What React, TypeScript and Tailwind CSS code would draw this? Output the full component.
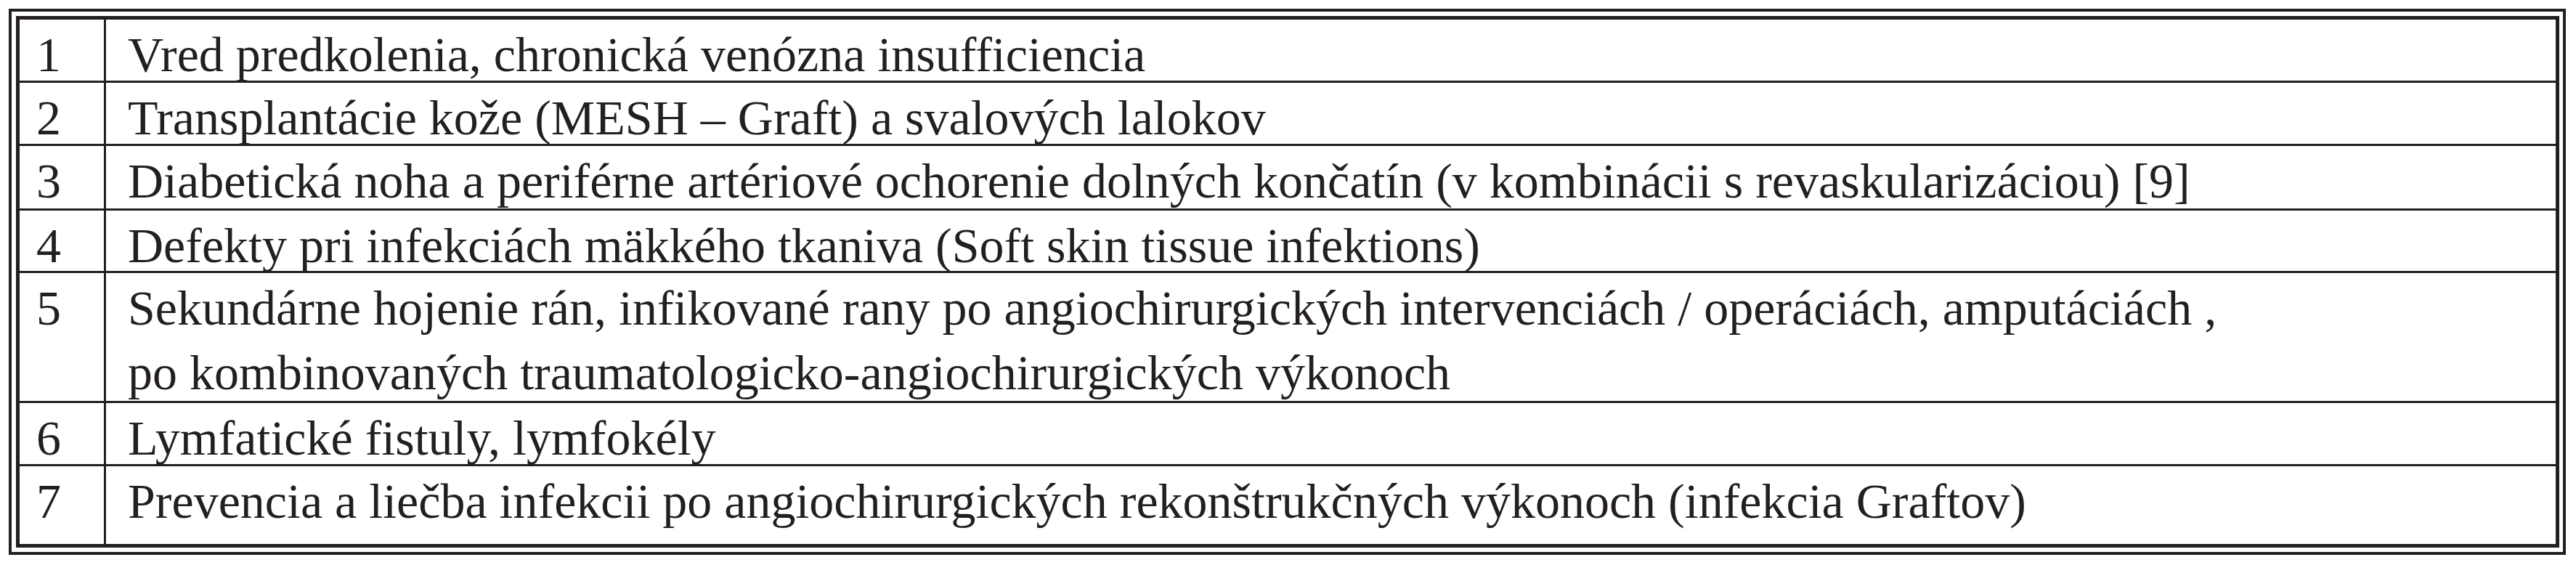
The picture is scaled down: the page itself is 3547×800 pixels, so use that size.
const rows: { n: string; h: string; text: React.ReactNode }[] = [
  { n: "1", h: "h-[87px]", text: "Vred predkolenia, chronická venózna insufficiencia" },
  { n: "2", h: "h-[87px]", text: "Transplantácie kože (MESH – Graft) a svalových lalokov" },
  {
    n: "3",
    h: "h-[89px]",
    text: "Diabetická noha a periférne artériové ochorenie dolných končatín (v kombinácii s revaskularizáciou) [9]",
  },
  { n: "4", h: "h-[86px]", text: "Defekty pri infekciách mäkkého tkaniva (Soft skin tissue infektions)" },
  {
    n: "5",
    h: "h-[179px]",
    text: (
      <>
        Sekundárne hojenie rán, infikované rany po angiochirurgických intervenciách / operáciách, amputáciách ,
        <br />
        po kombinovaných traumatologicko-angiochirurgických výkonoch
      </>
    ),
  },
  { n: "6", h: "h-[87px]", text: "Lymfatické fistuly, lymfokély" },
  {
    n: "7",
    h: "h-[107px]",
    text: "Prevencia a liečba infekcii po angiochirurgických rekonštrukčných výkonoch (infekcia Graftov)",
  },
];

export default function App() {
  return (
    <div className="min-h-[800px] bg-white p-[12px] font-['Liberation_Serif','Times_New_Roman',serif] text-[68px] text-[#231f20]">
      <div className="w-[3521px] border-4 border-[#231f20] p-[6px] pr-[5px]">
        <div className="border-[5px] border-[#231f20]">
          {rows.map((r, i) => (
            <div
              key={r.n}
              className={`flex ${r.h} ${i < rows.length - 1 ? "border-b-[3px] border-[#231f20]" : ""}`}
            >
              <div className="w-[119px] shrink-0 border-r-[3px] border-[#231f20] pl-[23px] pt-[4px] leading-[89px]">
                {r.n}
              </div>
              <div className="pl-[30px] pt-[4px] leading-[89px] whitespace-nowrap">{r.text}</div>
            </div>
          ))}
        </div>
      </div>
    </div>
  );
}
